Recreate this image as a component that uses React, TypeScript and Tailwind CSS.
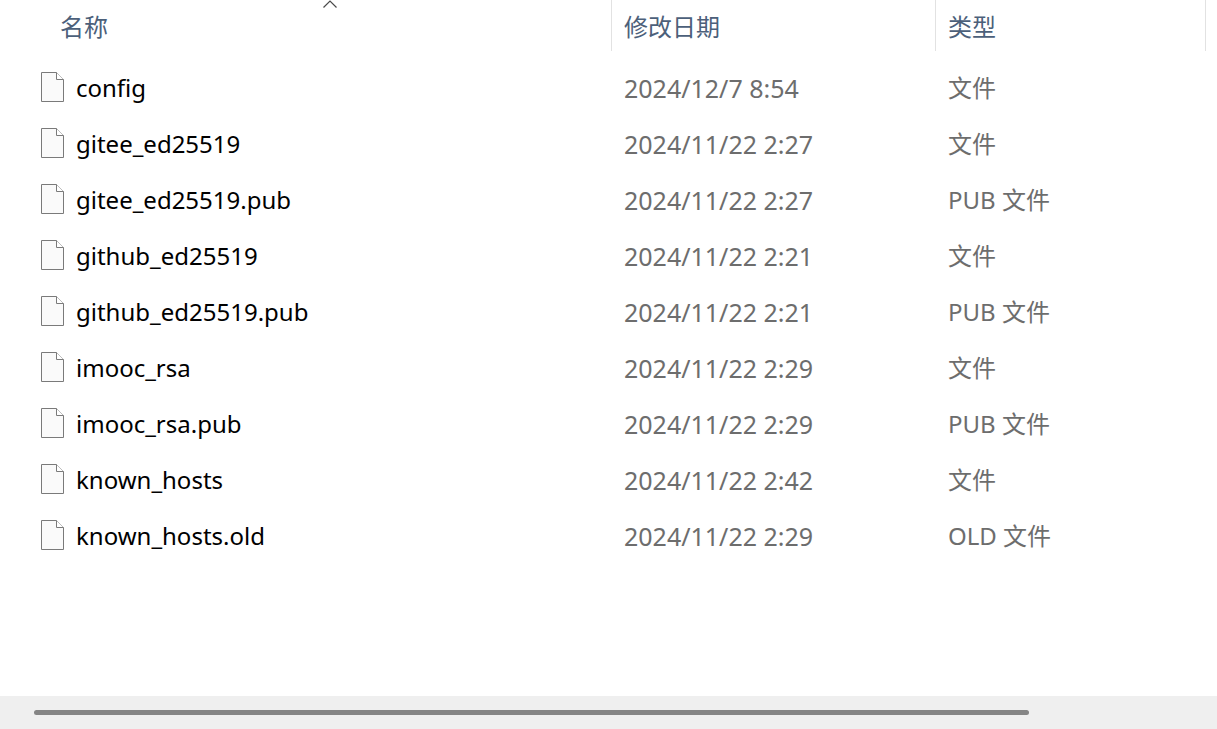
type FileEntry = { name: string; modified: string; kind: string };

const files: FileEntry[] = [
  { name: "config", modified: "2024/12/7 8:54", kind: "文件" },
  { name: "gitee_ed25519", modified: "2024/11/22 2:27", kind: "文件" },
  { name: "gitee_ed25519.pub", modified: "2024/11/22 2:27", kind: "PUB 文件" },
  { name: "github_ed25519", modified: "2024/11/22 2:21", kind: "文件" },
  { name: "github_ed25519.pub", modified: "2024/11/22 2:21", kind: "PUB 文件" },
  { name: "imooc_rsa", modified: "2024/11/22 2:29", kind: "文件" },
  { name: "imooc_rsa.pub", modified: "2024/11/22 2:29", kind: "PUB 文件" },
  { name: "known_hosts", modified: "2024/11/22 2:42", kind: "文件" },
  { name: "known_hosts.old", modified: "2024/11/22 2:29", kind: "OLD 文件" },
];

function FileIcon() {
  return (
    <svg className="shrink-0" width="24" height="32" viewBox="0 0 24 32" fill="none" aria-hidden="true">
      <path d="M1.5 0.5H16.5L23.5 7.5V29.5H1.5Z" fill="#fafafa" stroke="#7a7a7a" />
      <path d="M16.5 0.5V7.5H23.5" fill="#ffffff" stroke="#7a7a7a" />
    </svg>
  );
}

function SortArrow() {
  return (
    <svg className="absolute top-0 left-1/2 -translate-x-1/2" width="16" height="9" viewBox="0 0 16 9" fill="none" aria-hidden="true">
      <path d="M1.5 7.5L8 1L14.5 7.5" stroke="#4a4a4a" strokeWidth="1.2" />
    </svg>
  );
}

function ColumnHeader({ label, sorted = false }: { label: string; sorted?: boolean }) {
  return (
    <button
      type="button"
      className="relative block h-[51px] w-full border-r border-[#e2e2e2] pt-[3px] pl-3 text-left text-[24px] leading-[48px] font-normal text-[#4c607a]"
    >
      {sorted && <SortArrow />}
      {label}
    </button>
  );
}

function FileRow({ file }: { file: FileEntry }) {
  return (
    <tr className="h-14">
      <td className="p-0 pl-10">
        <div className="flex items-center gap-3">
          <FileIcon />
          <span className="text-black">{file.name}</span>
        </div>
      </td>
      <td className="p-0 pl-3 text-[25px]">{file.modified}</td>
      <td className="p-0 pl-3">{file.kind}</td>
      <td className="p-0" />
    </tr>
  );
}

export default function App() {
  return (
    <div className="flex min-h-screen flex-col bg-white font-['Noto_Sans','Noto_Sans_CJK_SC',sans-serif] text-[24px] leading-8 text-[#6d6d6d]">
      <main className="flex-1">
        <table className="w-full table-fixed border-collapse">
          <colgroup>
            <col className="w-[612px]" />
            <col className="w-[324px]" />
            <col className="w-[270px]" />
            <col />
          </colgroup>
          <thead>
            <tr className="h-15 align-top">
              <th className="p-0 pl-12" aria-sort="ascending">
                <ColumnHeader label="名称" sorted />
              </th>
              <th className="p-0">
                <ColumnHeader label="修改日期" />
              </th>
              <th className="p-0">
                <ColumnHeader label="类型" />
              </th>
              <td className="p-0" />
            </tr>
          </thead>
          <tbody>
            {files.map((file) => (
              <FileRow key={file.name} file={file} />
            ))}
          </tbody>
        </table>
      </main>
      <footer className="flex h-[33px] items-center bg-[#efefef] pr-[188px] pl-[34px]">
        <div className="h-[5px] flex-1 rounded-full bg-[#858585]" />
      </footer>
    </div>
  );
}
